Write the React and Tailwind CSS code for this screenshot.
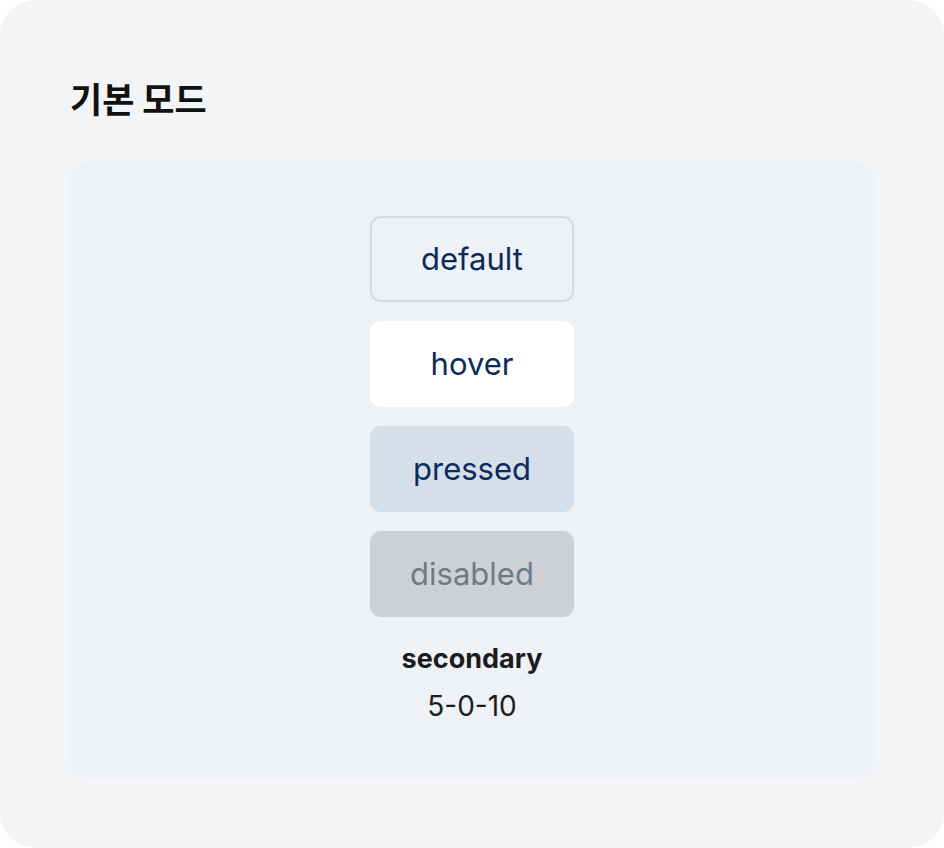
const states = [
  { label: 'default', className: 'border-2 border-[#d3dde9] bg-[#eef1f6] text-[#0b2b5c]' },
  { label: 'hover', className: 'bg-white text-[#0b2b5c]' },
  { label: 'pressed', className: 'bg-[#d5dfea] text-[#0b2b5c]' },
  { label: 'disabled', className: 'bg-[#cdd1d6] text-[#6f7a85]' },
];

const StateButton = ({ label, className }) => (
  <div
    className={`flex h-[86px] w-[204px] items-center justify-center rounded-[11px] text-[31px] ${className}`}
  >
    {label}
  </div>
);

export default function App() {
  return (
    <div className="min-h-[848px] w-[944px] bg-white" style={{ fontFamily: 'Inter, "Noto Sans CJK KR", sans-serif' }}>
      <div className="h-[848px] rounded-[36px] bg-[#f3f4f6] px-[70px] pt-[74px]">
        <h1 className="text-[35px] font-bold leading-[48px] text-[#111111]" style={{ fontFamily: '"Noto Sans CJK KR", sans-serif' }}>
          기본 모드
        </h1>
        <div className="mt-[40px] flex h-[616px] flex-col items-center rounded-[18px] bg-[#eef1f6] pt-[54px]">
          <div className="flex flex-col gap-[19px]">
            {states.map((s) => (
              <StateButton key={s.label} {...s} />
            ))}
          </div>
          <p className="mt-[24px] text-[27px] font-bold leading-[36px] text-[#1c1c1e]">secondary</p>
          <p className="mt-[11px] text-[28px] leading-[36px] text-[#1c1c1e]">5-0-10</p>
        </div>
      </div>
    </div>
  );
}
